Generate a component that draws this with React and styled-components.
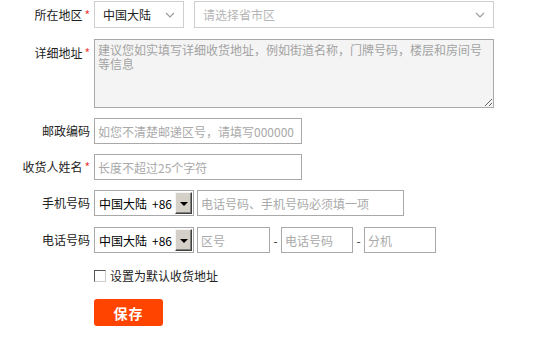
import React from 'react';
import styled, { createGlobalStyle } from 'styled-components';

const GlobalStyle = createGlobalStyle`
  body {
    margin: 0;
    background: #fff;
    font-family: "Microsoft YaHei", "Noto Sans CJK SC", sans-serif;
    font-size: 12px;
    color: #333;
  }
`

const Form = styled.div`
  display: flex;
  flex-direction: column;
  padding-top: 1px;
  width: 547px;
`

const Row = styled.div`
  display: flex;
  align-items: ${props => props.$top ? 'flex-start' : 'center'};
  margin-bottom: ${props => props.$gap ?? 10}px;
`

const Label = styled.label`
  width: 90px;
  margin-right: 4px;
  flex-shrink: 0;
  text-align: right;
  line-height: 14px;
  color: #222;
  white-space: nowrap;
  padding-top: ${props => props.$top ? 7 : 0}px;
`

const Star = styled.span`
  color: #f23c3c;
  margin-left: 2px;
  font-size: 12px;
`

const Select = styled.div`
  box-sizing: border-box;
  width: ${props => props.$w}px;
  height: 27px;
  border: 1px solid #cfcfcf;
  display: flex;
  align-items: center;
  justify-content: space-between;
  padding: 0 8px 0 8px;
  margin-right: 10px;
  color: ${props => props.$muted ? '#b5b5b5' : '#222'};
  font-size: 12px;
`

const Chevron = () => (
  <svg width="10" height="6" viewBox="0 0 10 6">
    <path d="M1 1 L5 5 L9 1" fill="none" stroke="#999" strokeWidth="1.1" />
  </svg>
)

const TextArea = styled.textarea`
  box-sizing: border-box;
  width: 400px;
  height: 69px;
  margin: 0;
  padding: 3px 3px;
  border: 1px solid #a9a9a9;
  background: #f4f4f4;
  font-family: inherit;
  font-size: 12px;
  line-height: 14px;
  &::placeholder {
    color: #a3a3a3;
  }
`

const Input = styled.input`
  box-sizing: border-box;
  width: ${props => props.$w}px;
  height: 26px;
  margin: 0 0 0 ${props => props.$ml || 0}px;
  padding: 0 3px;
  border: 1px solid #a9a9a9;
  background: #fff;
  font-family: inherit;
  font-size: 12px;
  outline: none;
  &::placeholder {
    color: #a9a9a9;
  }
`

const OldSelect = styled.div`
  box-sizing: border-box;
  width: 100px;
  height: 26px;
  border: 1px solid #a9a9a9;
  display: flex;
  align-items: center;
  padding: 1px 1px 1px 4px;
  color: #000;
  font-size: 12px;
  flex-shrink: 0;
`

const OldText = styled.span`
  flex: 1;
  white-space: nowrap;
`

const Code = styled.span`
  margin-left: 5px;
`

const DropBtn = styled.span`
  box-sizing: border-box;
  width: 17px;
  height: 100%;
  background: #d4d0c8;
  border-top: 1px solid #f4f4f4;
  border-left: 1px solid #f4f4f4;
  border-right: 1px solid #404040;
  border-bottom: 1px solid #404040;
  box-shadow: inset -1px -1px 0 #808080;
  display: flex;
  align-items: center;
  justify-content: center;
  &::after {
    content: '';
    border-left: 4px solid transparent;
    border-right: 4px solid transparent;
    border-top: 4px solid #000;
    margin-top: 1px;
  }
`

const Dash = styled.span`
  width: 11px;
  text-align: center;
  color: #333;
`

const CheckRow = styled.div`
  display: flex;
  align-items: center;
  padding-left: 94px;
  margin: 12px 0 12px;
  height: 22px;
  line-height: 14px;
  color: #222;
`

const Box = styled.span`
  box-sizing: border-box;
  width: 12px;
  height: 12px;
  border-top: 1px solid #555;
  border-left: 1px solid #555;
  border-right: 1px solid #ccc;
  border-bottom: 1px solid #ccc;
  background: #fff;
  margin-right: 4px;
`

const SaveButton = styled.button`
  margin-left: 94px;
  width: 69px;
  height: 27px;
  border: none;
  border-radius: 3px;
  background: #ff4400;
  color: #fff;
  font-family: inherit;
  font-size: 14px;
  font-weight: bold;
  letter-spacing: 1px;
  padding: 0;
  cursor: pointer;
`

export default function App() {
  return (
    <>
      <GlobalStyle />
      <Form>
        <Row $gap={11}>
          <Label>所在地区<Star>*</Star></Label>
          <Select $w={90}>中国大陆<Chevron /></Select>
          <Select $w={300} $muted>请选择省市区<Chevron /></Select>
        </Row>
        <Row $top>
          <Label $top>详细地址<Star>*</Star></Label>
          <TextArea placeholder="建议您如实填写详细收货地址，例如街道名称，门牌号码，楼层和房间号等信息" />
        </Row>
        <Row>
          <Label>邮政编码</Label>
          <Input $w={208} placeholder="如您不清楚邮递区号，请填写000000" />
        </Row>
        <Row>
          <Label>收货人姓名<Star>*</Star></Label>
          <Input $w={208} placeholder="长度不超过25个字符" />
        </Row>
        <Row $gap={11}>
          <Label>手机号码</Label>
          <OldSelect><OldText>中国大陆<Code>+86</Code></OldText><DropBtn /></OldSelect>
          <Input $w={207} $ml={3} placeholder="电话号码、手机号码必须填一项" />
        </Row>
        <Row $gap={0}>
          <Label>电话号码</Label>
          <OldSelect><OldText>中国大陆<Code>+86</Code></OldText><DropBtn /></OldSelect>
          <Input $w={73} $ml={3} placeholder="区号" />
          <Dash>-</Dash>
          <Input $w={72} placeholder="电话号码" />
          <Dash>-</Dash>
          <Input $w={72} placeholder="分机" />
        </Row>
        <CheckRow>
          <Box />
          设置为默认收货地址
        </CheckRow>
        <SaveButton>保存</SaveButton>
      </Form>
    </>
  );
}
